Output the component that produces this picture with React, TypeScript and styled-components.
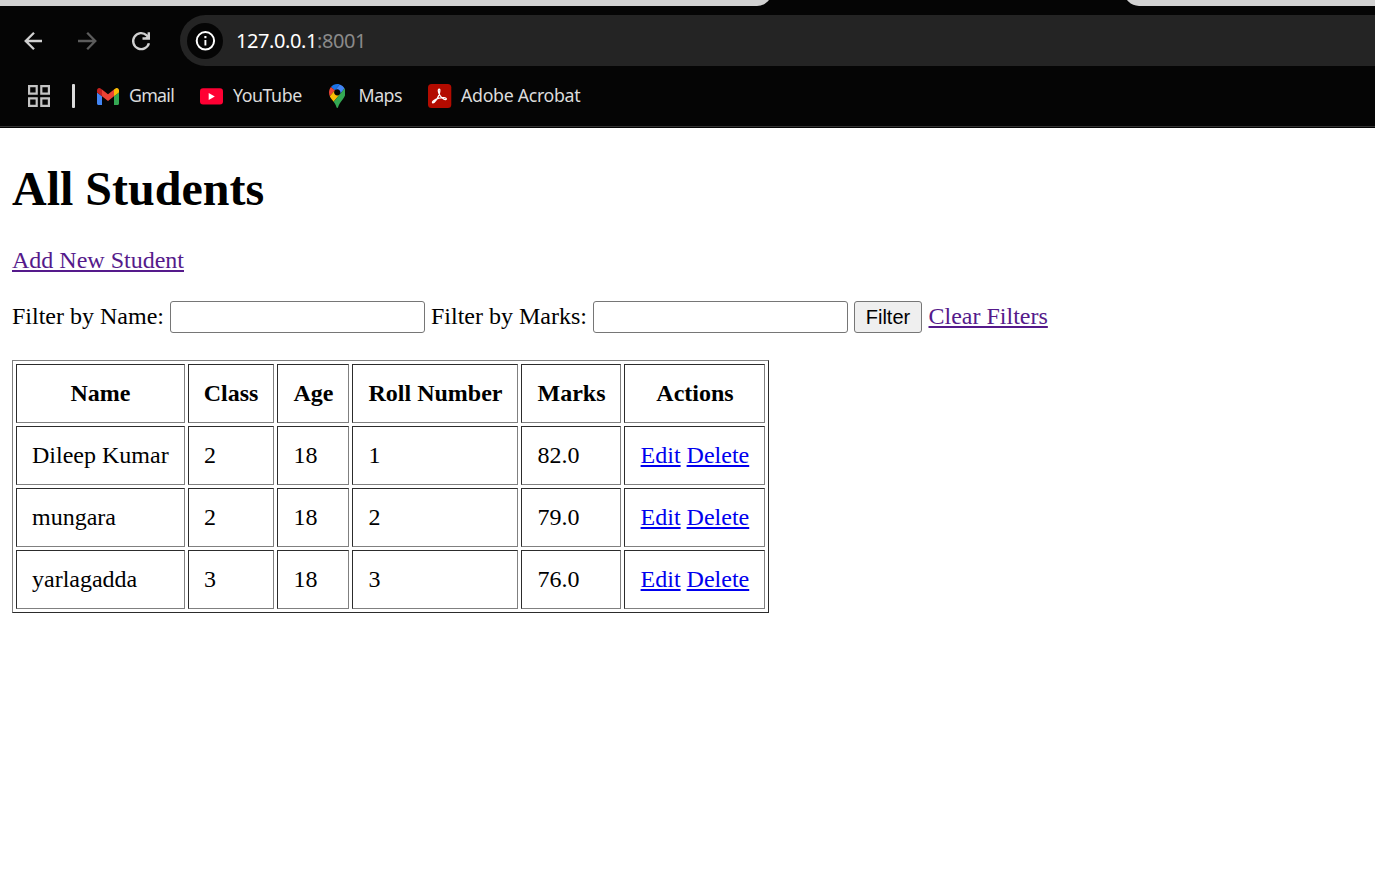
import React from "react";
import styled, { createGlobalStyle } from "styled-components";

const GlobalStyle = createGlobalStyle`
  *, *::before, *::after { box-sizing: border-box; }
  html, body { margin: 0; padding: 0; background: #fff; }
  body { overflow: hidden; }
`;

const Window = styled.div`
  width: 100%;
  height: 884px;
  display: flex;
  flex-direction: column;
`;

const Chrome = styled.header`
  height: 128px;
  flex: none;
  display: flex;
  flex-direction: column;
  background: #050505;
  color: #dcdcdc;
  font-family: "Noto Sans", "Open Sans", sans-serif;
`;

const TabStrip = styled.div`
  height: 6px;
  display: flex;
  justify-content: space-between;
  overflow: hidden;
`;

const TabEdge = styled.div<{ $side: "left" | "right" }>`
  width: ${(p) => (p.$side === "left" ? 772 : 251)}px;
  height: 24px;
  margin-top: -18px;
  background: #d2d2d2;
  border-radius: ${(p) => (p.$side === "left" ? "0 0 15px 0" : "0 0 0 15px")};
`;

const Toolbar = styled.div`
  height: 51px;
  margin-top: 9px;
  display: flex;
  align-items: center;
  padding-left: 20px;
`;

const NavButton = styled.span<{ $dim?: boolean }>`
  width: 26px;
  height: 26px;
  margin-right: 28px;
  color: ${(p) => (p.$dim ? "#5c5c5c" : "#d0d0d0")};
  svg { display: block; }
`;

const AddressBar = styled.div`
  flex: 1;
  height: 51px;
  margin-left: -2px;
  display: flex;
  align-items: center;
  padding-left: 7px;
  background: #242424;
  border-radius: 26px 0 0 26px;
`;

const SiteInfo = styled.span`
  width: 36px;
  height: 36px;
  margin-right: 13px;
  border-radius: 50%;
  background: #050505;
  display: grid;
  place-items: center;
`;

const Url = styled.span`
  font-size: 20px;
  line-height: 28px;
  letter-spacing: -0.42px;
  color: #fff;
`;

const Port = styled.span`
  color: #8a8a8a;
`;

const Bookmarks = styled.nav`
  height: 61px;
  display: flex;
  align-items: center;
  padding-left: 28px;
  border-bottom: 1px solid #333;
`;

const Divider = styled.span`
  width: 3px;
  height: 24px;
  margin: 0 22px;
  border-radius: 1px;
  background: #dcdcdc;
`;

const Bookmark = styled.span<{ $width: number; $gap: number }>`
  width: ${(p) => p.$width}px;
  display: flex;
  align-items: center;
  gap: ${(p) => p.$gap}px;
  white-space: nowrap;
  svg { flex: none; }
`;

const BookmarkName = styled.span<{ $track: number }>`
  padding-bottom: 2px;
  font-size: 17.8px;
  line-height: 24px;
  letter-spacing: ${(p) => p.$track}px;
`;

const Page = styled.main`
  flex: 1;
  padding: 32px 12px 0;
  color: #000;
  font: 24px/27px "Liberation Serif", "Times New Roman", serif;
`;

const Title = styled.h1`
  margin: 0 0 29px;
  font-size: 48px;
  line-height: 58px;
`;

const Link = styled.a<{ $visited?: boolean }>`
  color: ${(p) => (p.$visited ? "#551a8b" : "#0000ee")};
  text-decoration: underline;
  cursor: pointer;
`;

const FilterForm = styled.form`
  display: flex;
  align-items: center;
  height: 32px;
  margin: 27px 0;
  white-space: nowrap;

  label, a { padding-bottom: 2px; }
`;

const Label = styled.label<{ $width: number }>`
  width: ${(p) => p.$width}px;
`;

const Field = styled.input`
  width: 255px;
  height: 32px;
  margin: 0 6px 0 0;
  border: 1px solid #767676;
  border-radius: 3px;
  background: #fff;
  font: 20px "Liberation Sans", Arial, sans-serif;
`;

const FilterButton = styled.button`
  width: 68px;
  height: 32px;
  margin: 0 6.5px 0 0;
  padding: 0;
  border: 1px solid #767676;
  border-radius: 3px;
  background: #efefef;
  color: #000;
  font: 20px "Liberation Sans", Arial, sans-serif;
`;

const Table = styled.table`
  width: 757px;
  table-layout: fixed;
  border-collapse: separate;
  border-spacing: 3px;
  border: 1px solid;
  border-color: #808080 #2c2c2c #2c2c2c #808080;
`;

const Cell = styled.td`
  height: 59px;
  padding: 0 15px;
  border: 1px solid;
  border-color: #2c2c2c #808080 #808080 #2c2c2c;
  white-space: nowrap;

  &:nth-child(n + 3) { padding-left: 15.6px; }
`;

const HeadCell = styled(Cell).attrs({ as: "th" })<{ $width: number }>`
  width: ${(p) => p.$width}px;
  padding: 0;
  text-align: center;

  &:nth-child(n + 3) { padding-left: 1px; }
`;

const ArrowIcon = ({ flip = false }: { flip?: boolean }) => (
  <svg width="26" height="26" viewBox="0 0 26 26" fill="none" stroke="currentColor" strokeWidth="2.3">
    <path d={flip ? "M4 13H21M13.2 4.7L21.3 13L13.2 21.3" : "M22 13H5.200M14 4.7L5.700 13L14 21.3"} />
  </svg>
);

const ReloadIcon = () => (
  <svg width="26" height="26" viewBox="0 0 26 26" fill="none" stroke="currentColor" strokeWidth="2.4">
    <path d="M20.9 15.200A8 8 0 1 1 18.700 7.300L20 8.800" />
    <path d="M20.800 4.2V10.500H14.5" />
    <path d="M21 6V10.500H16.500Z" fill="currentColor" stroke="none" />
  </svg>
);

const InfoIcon = () => (
  <svg width="22" height="22" viewBox="0 0 22 22" fill="none" stroke="#fff">
    <circle cx="11.400" cy="10.800" r="8.7" strokeWidth="2" />
    <path d="M11.400 10V15.500" strokeWidth="1.900" />
    <path d="M11.400 6V8.2" strokeWidth="2.1" />
  </svg>
);

const AppsIcon = () => (
  <svg width="22" height="22" viewBox="0 0 22 22" fill="none" stroke="#c4c4c4" strokeWidth="2.2">
    <path d="M1.1 1.1h7.6v7.6H1.1zM13.3 1.1h7.6v7.6h-7.6zM1.1 13.3h7.6v7.6H1.1zM13.3 13.3h7.6v7.6h-7.6z" />
  </svg>
);

const GmailIcon = () => (
  <svg width="22" height="17" viewBox="52 42 88 66" preserveAspectRatio="none">
    <path fill="#4285f4" d="M58 108h14V74L52 59v43c0 3.320 2.690 6 6 6" />
    <path fill="#34a853" d="M120 108h14c3.320 0 6-2.690 6-6V59l-20 15" />
    <path fill="#fbbc04" d="M120 48v26l20-15v-8c0-7.420-8.470-11.650-14.400-7.200" />
    <path fill="#ea4335" d="M72 74V48l24 18 24-18v26L96 92" />
    <path fill="#c5221f" d="M52 51v8l20 15V48l-5.600-4.200c-5.940-4.450-14.400-.220-14.400 7.200" />
  </svg>
);

const YouTubeIcon = () => (
  <svg width="23" height="17" viewBox="0 0 23 17">
    <rect y="0.300" width="23" height="16.200" rx="3" fill="#ff0033" />
    <path d="M8.700 5L14.800 8.400L8.700 11.900Z" fill="#fff" />
  </svg>
);

const MapsIcon = () => (
  <svg width="16.500" height="24" viewBox="0 0 92.300 132.300" preserveAspectRatio="none">
    <path fill="#1a73e8" d="M60.200 2.200C55.800.8 51 0 46.100 0 32 0 19.300 6.400 10.800 16.500l21.800 18.300L60.200 2.200z" />
    <path fill="#ea4335" d="M10.800 16.500C4.100 24.500 0 34.900 0 46.100c0 8.700 1.700 15.700 4.600 22l28-33.300-21.800-18.300z" />
    <path fill="#4285f4" d="M46.200 28.500c9.800 0 17.700 7.900 17.700 17.700 0 4.300-1.600 8.300-4.200 11.400 0 0 13.900-16.600 27.500-32.700-5.600-10.800-15.300-19-27-22.700L32.600 34.800c3.300-3.800 8.100-6.300 13.600-6.300" />
    <path fill="#fbbc04" d="M46.200 63.800c-9.800 0-17.700-7.900-17.700-17.700 0-4.300 1.500-8.300 4.100-11.300l-28 33.300c4.800 10.600 12.800 19.200 21 29.900l34.100-40.500c-3.300 3.900-8.100 6.300-13.500 6.300" />
    <path fill="#34a853" d="M59.100 109.200c15.400-24.100 33.300-35 33.300-63 0-7.700-1.900-14.900-5.200-21.300L25.600 98c2.600 3.400 5.300 7.300 7.900 11.300 9.400 14.500 6.800 23.100 12.800 23.100s3.400-8.700 12.800-23.200" />
  </svg>
);

const AcrobatIcon = () => (
  <svg width="24" height="24" viewBox="0 0 24 24">
    <rect width="23.300" height="24" rx="3.500" fill="#b30b00" />
    <path
      d="M10.700 5.300C12.600 4.200 11.800 8.700 10.700 11.400C9.200 15 6.200 19.100 4.800 18.800C3.300 18.100 7.300 15.200 10.900 14.200C14.300 13.300 18.400 13.400 18.300 15.100C17.800 17 13.600 14 12 11.500C10.700 9.500 9.700 6.100 10.700 5.300Z"
      fill="none"
      stroke="#fff"
      strokeWidth="1.300"
      strokeLinejoin="round"
    />
  </svg>
);

const bookmarks = [
  { name: "Gmail", Icon: GmailIcon, width: 103, gap: 10, track: -0.75 },
  { name: "YouTube", Icon: YouTubeIcon, width: 128.5, gap: 10, track: -0.45 },
  { name: "Maps", Icon: MapsIcon, width: 99.5, gap: 13.5, track: -0.5 },
  { name: "Adobe Acrobat", Icon: AcrobatIcon, width: 160, gap: 9, track: -0.33 },
];

const columns = [
  { name: "Name", width: 169 },
  { name: "Class", width: 86 },
  { name: "Age", width: 72 },
  { name: "Roll Number", width: 166 },
  { name: "Marks", width: 100 },
  { name: "Actions", width: 141 },
];

const students = [
  { name: "Dileep Kumar", grade: 2, age: 18, roll: 1, marks: "82.0" },
  { name: "mungara", grade: 2, age: 18, roll: 2, marks: "79.0" },
  { name: "yarlagadda", grade: 3, age: 18, roll: 3, marks: "76.0" },
];

export default function App() {
  return (
    <Window>
      <GlobalStyle />
      <Chrome>
        <TabStrip>
          <TabEdge $side="left" />
          <TabEdge $side="right" />
        </TabStrip>
        <Toolbar>
          <NavButton><ArrowIcon /></NavButton>
          <NavButton $dim><ArrowIcon flip /></NavButton>
          <NavButton><ReloadIcon /></NavButton>
          <AddressBar>
            <SiteInfo><InfoIcon /></SiteInfo>
            <Url>127.0.0.1<Port>:8001</Port></Url>
          </AddressBar>
        </Toolbar>
        <Bookmarks>
          <AppsIcon />
          <Divider />
          {bookmarks.map(({ name, Icon, width, gap, track }) => (
            <Bookmark key={name} $width={width} $gap={gap}>
              <Icon />
              <BookmarkName $track={track}>{name}</BookmarkName>
            </Bookmark>
          ))}
        </Bookmarks>
      </Chrome>
      <Page>
        <Title>All Students</Title>
        <Link $visited>Add New Student</Link>
        <FilterForm>
          <Label $width={158}>Filter by Name:</Label>
          <Field type="text" />
          <Label $width={162}>Filter by Marks:</Label>
          <Field type="text" />
          <FilterButton type="button">Filter</FilterButton>
          <Link $visited>Clear Filters</Link>
        </FilterForm>
        <Table>
          <thead>
            <tr>
              {columns.map((c) => (
                <HeadCell key={c.name} $width={c.width}>{c.name}</HeadCell>
              ))}
            </tr>
          </thead>
          <tbody>
            {students.map((s) => (
              <tr key={s.roll}>
                <Cell>{s.name}</Cell>
                <Cell>{s.grade}</Cell>
                <Cell>{s.age}</Cell>
                <Cell>{s.roll}</Cell>
                <Cell>{s.marks}</Cell>
                <Cell><Link>Edit</Link> <Link>Delete</Link></Cell>
              </tr>
            ))}
          </tbody>
        </Table>
      </Page>
    </Window>
  );
}
